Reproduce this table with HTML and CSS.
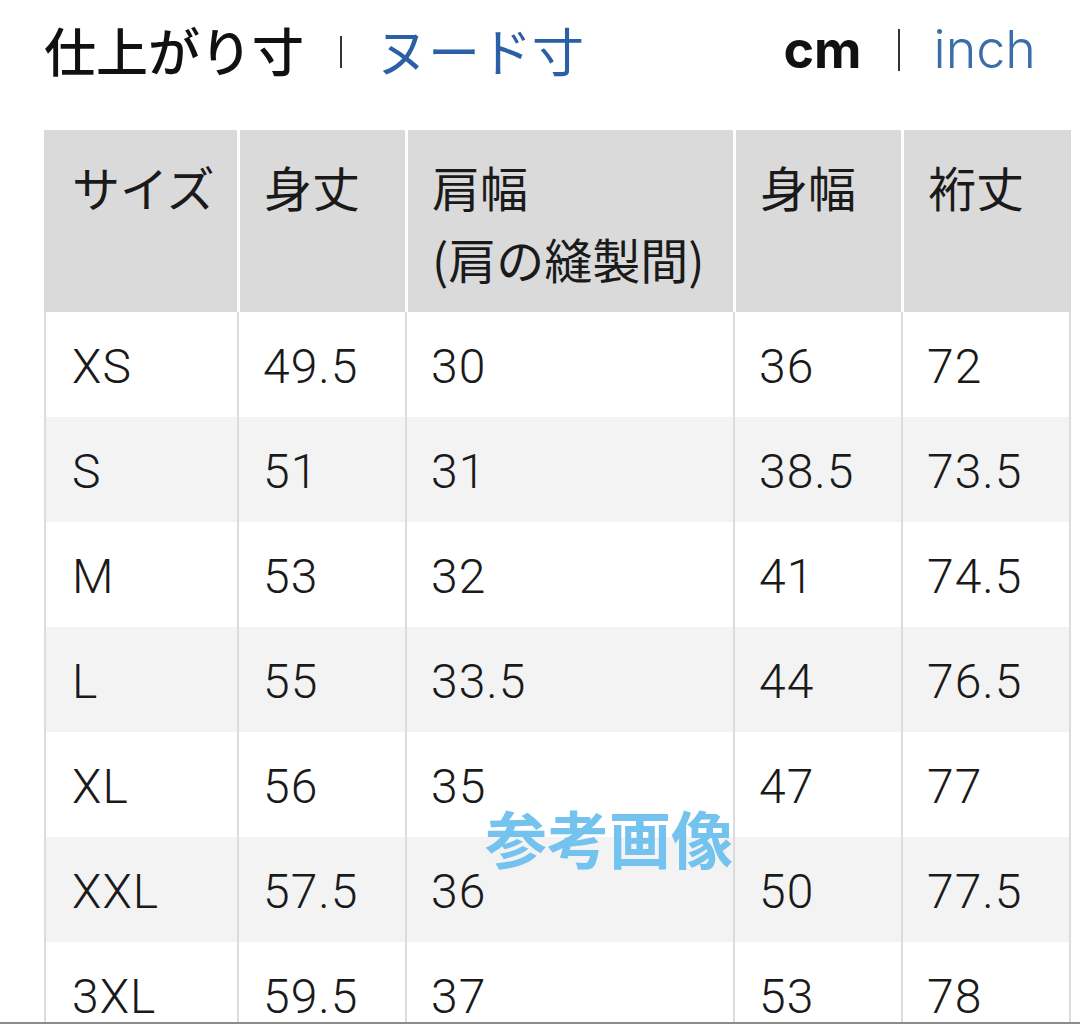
FILE: index.html
```html
<!DOCTYPE html>
<html lang="ja">
<head>
<meta charset="utf-8">
<link rel="stylesheet" href="styles.css">
</head>
<body>
<div class="page">
  <header class="top">
    <div class="tabs">
      <span class="tab active">仕上がり寸</span>
      <span class="sep sep-jp"></span>
      <span class="tab link">ヌード寸</span>
    </div>
    <div class="units">
      <span class="unit active">cm</span>
      <span class="sep sep-unit"></span>
      <span class="unit link">inch</span>
    </div>
  </header>

  <table class="size-table">
    <colgroup>
      <col class="c1"><col class="c2"><col class="c3"><col class="c4"><col class="c5">
    </colgroup>
    <thead>
      <tr>
        <th>サイズ</th>
        <th>身丈</th>
        <th>肩幅<br>(肩の縫製間)</th>
        <th>身幅</th>
        <th>裄丈</th>
      </tr>
    </thead>
    <tbody>
      <tr><td>XS</td><td>49.5</td><td>30</td><td>36</td><td>72</td></tr>
      <tr class="alt"><td>S</td><td>51</td><td>31</td><td>38.5</td><td>73.5</td></tr>
      <tr><td>M</td><td>53</td><td>32</td><td>41</td><td>74.5</td></tr>
      <tr class="alt"><td>L</td><td>55</td><td>33.5</td><td>44</td><td>76.5</td></tr>
      <tr><td>XL</td><td>56</td><td>35</td><td>47</td><td>77</td></tr>
      <tr class="alt"><td>XXL</td><td>57.5</td><td>36</td><td>50</td><td>77.5</td></tr>
      <tr><td>3XL</td><td>59.5</td><td>37</td><td>53</td><td>78</td></tr>
    </tbody>
  </table>

  <div class="watermark">参考画像</div>
</div>
</body>
</html>
```

FILE: styles.css
```css
html, body {
  margin: 0;
  padding: 0;
  background: #ffffff;
}

.page {
  position: relative;
  height: 1022px;
  overflow: hidden;
  border-bottom: 2px solid #8c8c8c;
  font-family: Roboto, "Noto Sans CJK JP", sans-serif;
  color: #1a1a1a;
}

.top {
  display: flex;
  justify-content: space-between;
  align-items: center;
  height: 100px;
  padding: 0 44px 0 44px;
}

.tabs, .units {
  display: flex;
  align-items: center;
}

.tab {
  font-family: "Noto Sans CJK JP", sans-serif;
  font-size: 52px;
  line-height: 1;
}

.tab.active {
  font-weight: 500;
  color: #111111;
}

.tab.link {
  font-weight: 400;
  color: #2b5fa6;
}

.sep {
  display: inline-block;
  width: 2px;
  background: #333333;
}

.sep-jp {
  height: 32px;
  margin: 4px 34px 0 36px;
}

.sep-unit {
  height: 42px;
  margin: 0 34px 0 36px;
}

.unit {
  font-family: Inter, sans-serif;
  font-size: 52px;
  line-height: 1;
}

.unit.active {
  font-weight: 700;
  color: #111111;
}

.unit.link {
  font-weight: 300;
  color: #3b6ea8;
}

.size-table {
  margin: 30px 0 0 44px;
  width: 1027px;
  table-layout: fixed;
  border-collapse: separate;
  border-spacing: 0;
  font-size: 48px;
}

.c1 { width: 193px; }
.c2 { width: 168px; }
.c3 { width: 328px; }
.c4 { width: 168px; }
.c5 { width: 170px; }

.size-table thead tr {
  height: 182px;
}

.size-table th {
  background: #dadada;
  font-family: "Noto Sans CJK JP", sans-serif;
  font-weight: 400;
  text-align: left;
  vertical-align: top;
  line-height: 72px;
  padding: 20px 8px 0 24px;
  color: #1a1a1a;
  border-left: 3px solid #ffffff;
}

.size-table th:first-child {
  border-left: 0;
  padding-left: 28px;
}

.size-table tbody tr {
  height: 105px;
}

.size-table tbody tr.alt td {
  background: #f3f3f3;
}

.size-table td {
  font-family: Roboto, "Noto Sans CJK JP", sans-serif;
  font-weight: 300;
  letter-spacing: 1px;
  line-height: 72px;
  padding: 19px 8px 14px 24px;
  vertical-align: middle;
  color: #1a1a1a;
  border-left: 2px solid #dcdcdc;
  background: #ffffff;
}

.size-table td:first-child {
  padding-left: 26px;
}

.size-table td:last-child {
  border-right: 2px solid #dcdcdc;
}

.watermark {
  position: absolute;
  left: 485px;
  top: 803px;
  font-family: "Noto Sans CJK JP", sans-serif;
  font-weight: 700;
  font-size: 62px;
  line-height: 1.1;
  color: #74c3ef;
}
```
